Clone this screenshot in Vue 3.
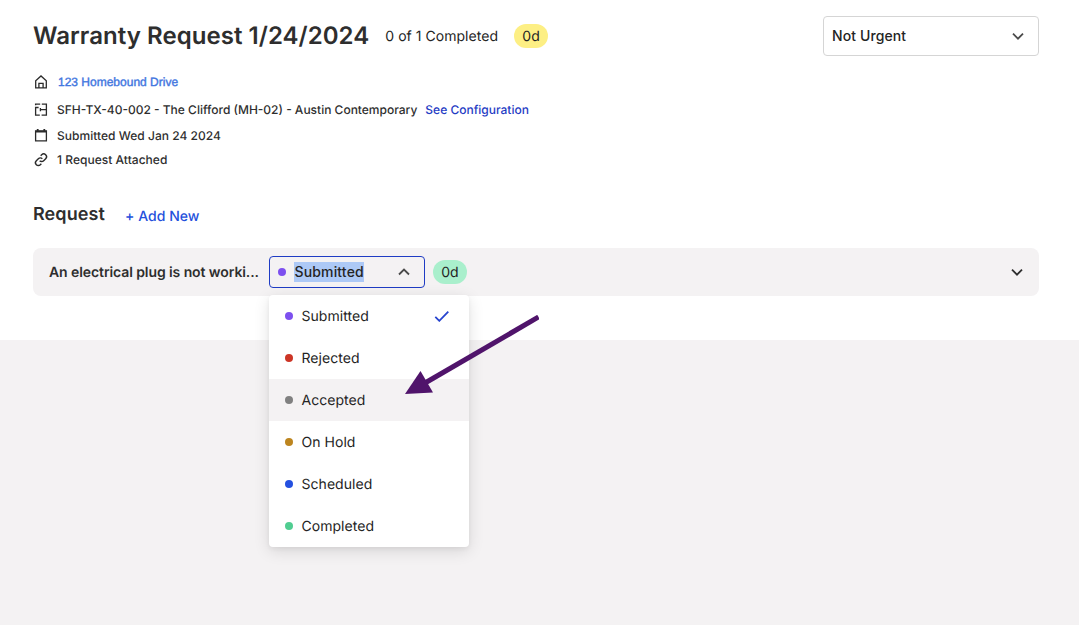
<template>
  <div class="page">
    <main class="panel">
      <header class="header">
        <h1 class="title">Warranty Request 1/24/2024</h1>
        <span class="progress">0 of 1 Completed</span>
        <span class="badge yellow">0d</span>
        <button class="urgency">
          <span>Not Urgent</span>
          <svg width="12" height="8" viewBox="0 0 12 8"><path d="M1 1.7l5 5 5-5" /></svg>
        </button>
      </header>

      <ul class="details">
        <li class="address">
          <svg width="16" height="16" viewBox="0 0 16 16">
            <path d="M2.7 13.9V6.8L8 2l5.3 4.8v7.1zM5.9 13.7V9.3h4.2v4.4" />
          </svg>
          <a class="address-link">123 Homebound Drive</a>
        </li>
        <li class="plan">
          <svg width="16" height="16" viewBox="0 0 16 16">
            <path d="M2.6 4.2V3.1h4.6M8.8 3.1h4.6v11H8.6M6.8 14.1H2.6V6.500h3M13.4 8.700H7.400V7M7.400 8.700v1.500" />
          </svg>
          <span>SFH-TX-40-002 - The Clifford (MH-02) - Austin Contemporary</span>
          <a class="config">See Configuration</a>
        </li>
        <li class="date">
          <svg width="16" height="16" viewBox="0 0 16 16">
            <path d="M2.6 4h10.8v9.9H2.6z" />
            <path class="thick" d="M2.6 4.6h10.8M4.7 2v2.5M11.3 2v2.5" />
          </svg>
          <span>Submitted Wed Jan 24 2024</span>
        </li>
        <li class="attached">
          <svg width="16" height="16" viewBox="0 0 24 24">
            <path class="link" d="M10 14.5a4.2 4.2 0 0 0 6 0l3-3a4.2 4.2 0 0 0-6-6l-1.5 1.500M14 11.500a4.200 4.200 0 0 0-6 0l-3 3a4.200 4.200 0 0 0 6 6l1.500-1.500" />
          </svg>
          <span>1 Request Attached</span>
        </li>
      </ul>

      <div class="section-head">
        <h2>Request</h2>
        <a class="add">+ Add New</a>
      </div>

      <div class="request">
        <span class="name">An electrical plug is not worki...</span>
        <div class="status">
          <button class="select">
            <i class="dot submitted"></i>
            <span class="value">Submitted</span>
            <svg width="12" height="8" viewBox="0 0 12 8"><path d="M1 6.5l5-5 5 5" /></svg>
          </button>
          <ul class="menu">
            <li v-for="s in statuses" :key="s" :class="{ active: s === hovered }">
              <i class="dot" :class="s.toLowerCase().replace(' ', '-')"></i>
              <span>{{ s }}</span>
              <svg v-if="s === selected" class="check" width="16" height="12" viewBox="0 0 16 12">
                <path d="M1.3 6.8l4 4L14.3 1.6" />
              </svg>
            </li>
          </ul>
        </div>
        <span class="badge green">0d</span>
        <svg class="expand" width="12" height="8" viewBox="0 0 12 8"><path d="M1 1.7l5 5 5-5" /></svg>
      </div>
    </main>

    <svg class="arrow" width="134" height="79" viewBox="0 0 134 79">
      <path class="shaft" d="M133.5 2L20 68" />
      <path class="head" d="M0 79L15.5 56L28 77.5z" />
    </svg>
  </div>
</template>

<script setup>
import { ref } from 'vue'

const statuses = ['Submitted', 'Rejected', 'Accepted', 'On Hold', 'Scheduled', 'Completed']
const selected = ref('Submitted')
const hovered = ref('Accepted')
</script>

<style>
body {
  background: #f4f2f3;
}
</style>

<style scoped>
.page {
  position: relative;
  height: 625px;
  overflow: hidden;
  font-family: Inter, sans-serif;
  font-size: 14px;
  line-height: 20px;
  letter-spacing: 0.04px;
  text-rendering: geometricPrecision;
  color: #242424;
}

.page * {
  box-sizing: border-box;
}

.panel {
  height: 340px;
  padding: 16px 40px 0 33px;
  background: #fff;
}

h1, h2, ul {
  margin: 0;
  padding: 0;
  font-weight: 600;
  color: #2e2e2e;
}

ul {
  list-style: none;
}

svg {
  fill: none;
  stroke: #4a4a4a;
  stroke-width: 1.8;
  flex-shrink: 0;
}

button {
  font: inherit;
  letter-spacing: inherit;
  color: inherit;
  display: flex;
  align-items: center;
}

.header {
  display: flex;
  align-items: center;
  height: 40px;
}

.title {
  font-size: 24px;
  line-height: 32px;
  letter-spacing: 0.05px;
  white-space: nowrap;
}

.progress {
  margin-left: 16px;
  padding-top: 2px;
}

.badge {
  display: flex;
  align-items: center;
  justify-content: center;
  width: 34px;
  height: 24px;
  padding-top: 2px;
  border-radius: 12px;
}

.yellow {
  margin-left: 16px;
  background: #fdef84;
}

.green {
  margin-left: 8px;
  background: #a9efcc;
}

.urgency {
  justify-content: space-between;
  width: 216px;
  height: 40px;
  margin-left: auto;
  padding: 0 14px 0 8px;
  border: 1px solid #d5d5d5;
  border-radius: 4px;
  background: #fff;
  font-weight: 500;
  letter-spacing: 0.1px;
}

.details {
  padding-top: 14px;
}

.details li {
  display: flex;
  align-items: center;
  height: 24px;
  font-size: 12px;
  font-weight: 500;
  letter-spacing: 0.03px;
}

.details span {
  padding-top: 2px;
}

.details svg {
  margin-right: 8px;
  stroke: #2b2b2b;
  stroke-width: 1.3;
}

.details .thick {
  stroke-width: 1.8;
}

.details .link {
  stroke-width: 2.1;
}

.address-link {
  margin-left: 1px;
  font-family: "Liberation Sans", Arial, sans-serif;
  letter-spacing: 0;
  color: #4377df;
  -webkit-text-stroke: 0.4px #4377df;
}

.details .plan {
  height: 30px;
  letter-spacing: 0;
}

.details .date {
  height: 22px;
}

.details .attached {
  height: 26px;
}

.config {
  margin-left: 8px;
  padding-top: 2px;
  color: #1f3cc4;
}

.section-head {
  display: flex;
  align-items: center;
  height: 28px;
  margin-top: 28px;
}

.section-head h2 {
  padding-top: 2px;
  font-size: 18px;
  line-height: 28px;
  letter-spacing: 0.1px;
}

.add {
  margin: 6px 0 0 20px;
  font-weight: 500;
  color: #2450dc;
}

.request {
  display: flex;
  align-items: center;
  height: 48px;
  margin-top: 20px;
  padding: 0 16px;
  border-radius: 8px;
  background: #f4f2f3;
}

.name {
  width: 212px;
  margin-right: 8px;
  padding-top: 2px;
  white-space: nowrap;
  font-weight: 600;
  letter-spacing: -0.09px;
  color: #2e2e2e;
}

.status {
  position: relative;
}

.select {
  width: 156px;
  height: 32px;
  padding: 0 14px 0 8px;
  border: 1px solid #1f3cc4;
  border-radius: 4px;
  background: #f4f2f3;
  font-weight: 500;
  letter-spacing: 0.15px;
}

.value {
  margin: 0 auto 0 8px;
  padding-left: 0.5px;
  line-height: 20px;
  background: #adc9f6;
}

.dot {
  width: 8px;
  height: 8px;
  border-radius: 50%;
}

.submitted { background: #7d50ef; }
.rejected { background: #cc3526; }
.accepted { background: #808080; }
.on-hold { background: #bd851f; }
.scheduled { background: #2450e0; }
.completed { background: #50cd91; }

.menu {
  position: absolute;
  top: 39px;
  left: 0;
  width: 200px;
  border-radius: 4px;
  background: #fff;
  box-shadow: 0 4px 16px rgba(0, 0, 0, 0.12), 0 2px 4px rgba(0, 0, 0, 0.05);
  font-weight: 400;
  color: #242424;
}

.menu li {
  display: flex;
  align-items: center;
  height: 42px;
  padding: 0 19px 0 16px;
}

.menu span {
  margin-left: 8.5px;
  padding-top: 2px;
}

.menu .active {
  background: #f4f2f3;
}

.check {
  margin-left: auto;
  stroke: #2744cf;
}

.expand {
  margin-left: auto;
  stroke: #2e2e2e;
}

.arrow {
  position: absolute;
  left: 405px;
  top: 315px;
}

.shaft {
  stroke: #50146b;
  stroke-width: 5;
}

.head {
  stroke: none;
  fill: #50146b;
}
</style>
